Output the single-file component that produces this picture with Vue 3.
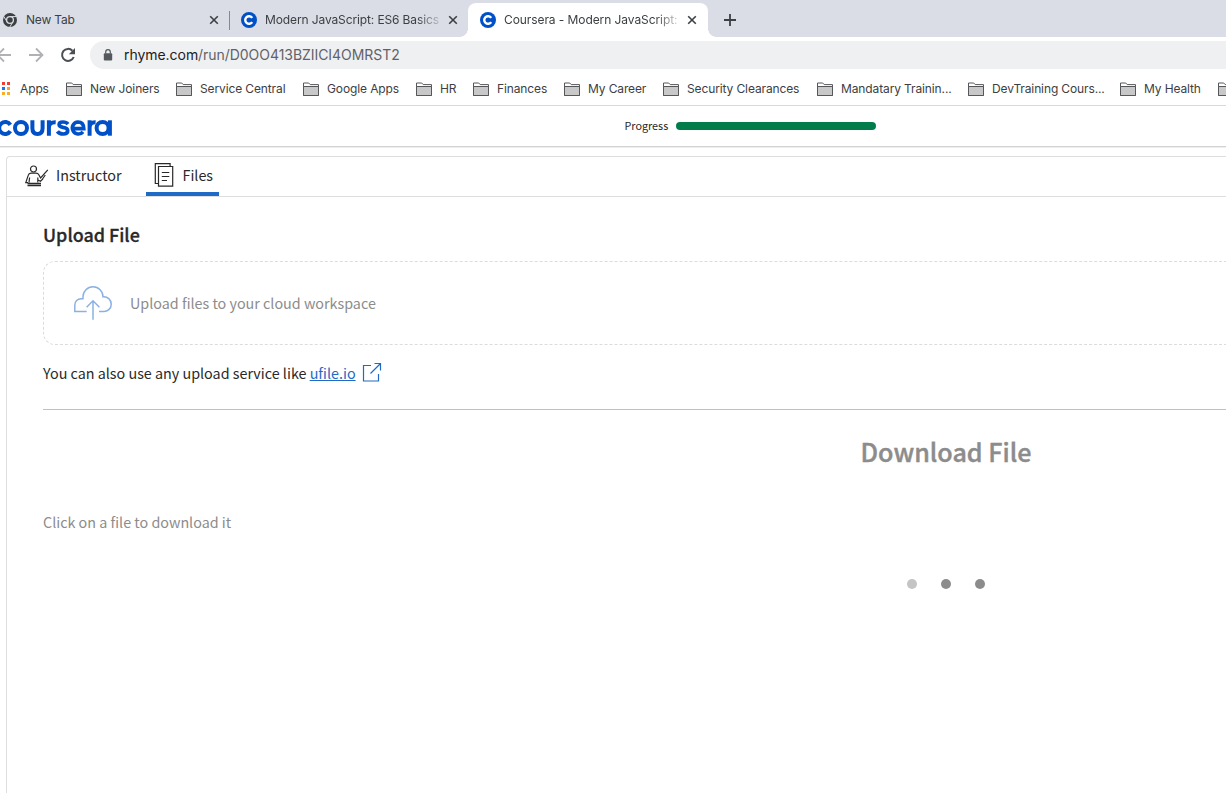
<script setup>
const bookmarks = [
  { label: 'New Joiners', x: 66, end: 176 },
  { label: 'Service Central', x: 176, end: 303 },
  { label: 'Google Apps', x: 303, end: 416 },
  { label: 'HR', x: 416, end: 473 },
  { label: 'Finances', x: 473, end: 564 },
  { label: 'My Career', x: 564, end: 663 },
  { label: 'Security Clearances', x: 663, end: 817 },
  { label: 'Mandatary Trainin...', x: 817, end: 968 },
  { label: 'DevTraining Cours...', x: 968, end: 1120 },
  { label: 'My Health', x: 1120, end: 1218 },
  { label: '', x: 1218, end: 1250 },
]
const appDots = ['#f33b30', '#f33b30', '#1a73e8', '#f9a02b', '#fbad28', '#fbad28']
</script>

<template>
  <div class="window">
    <div class="tabs">
      <div class="tab first">
        <svg class="chrome" width="16" height="16" viewBox="0 0 16 16">
          <circle cx="8" cy="8" r="7" fill="#3c4043" />
          <circle cx="8" cy="8" r="3.4" fill="#3c4043" stroke="#dadde5" stroke-width="1.3" />
          <path d="M8 4.6H14.4M5 9.7L1.7 4.3M11 9.7L7.8 15" stroke="#dadde5" stroke-width="1" />
        </svg>
        <span class="title t1">New Tab</span>
        <svg class="close" width="8" height="8" viewBox="0 0 8 8"><path d="M.2.2l7.600 7.600M7.800.2L.2 7.800" /></svg>
      </div>
      <div class="tab second">
        <svg class="fav" width="16" height="16" viewBox="0 0 16 16">
          <circle cx="8" cy="8" r="8" fill="#0050c8" />
          <path d="M11.2 5.9A3.8 3.8 0 1 0 11.2 10.1" fill="none" stroke="#fff" stroke-width="2.4" />
        </svg>
        <span class="title t2">Modern JavaScript: ES6 Basics</span>
        <svg class="close" width="8" height="8" viewBox="0 0 8 8"><path d="M.2.2l7.600 7.600M7.800.2L.2 7.800" /></svg>
      </div>
      <div class="tab active">
        <svg class="fav" width="16" height="16" viewBox="0 0 16 16">
          <circle cx="8" cy="8" r="8" fill="#0050c8" />
          <path d="M11.2 5.9A3.8 3.8 0 1 0 11.2 10.1" fill="none" stroke="#fff" stroke-width="2.4" />
        </svg>
        <span class="title t3">Coursera - Modern JavaScript:</span>
        <svg class="close" width="8" height="8" viewBox="0 0 8 8"><path d="M.2.2l7.600 7.600M7.800.2L.2 7.800" /></svg>
      </div>
      <svg class="plus" width="12" height="12" viewBox="0 0 12 12"><path d="M6 0v12M0 6h12" stroke="#3c4043" stroke-width="1.8" /></svg>
    </div>

    <div class="toolbar">
      <svg class="nav" width="90" height="28" viewBox="0 0 90 28" fill="none">
        <path d="M11 14H-2M4 7.500l-6.500 6.500 6.500 6.500" stroke="#afb1b4" stroke-width="1.8" />
        <path d="M29 14h13M36 7.500l6.500 6.500-6.500 6.500" stroke="#afb1b4" stroke-width="1.8" />
        <path d="M72.400 9.700A6 6 0 1 0 73.700 16" stroke="#4b4e52" stroke-width="2" />
        <path d="M75 7v6.200h-6.200z" fill="#4b4e52" />
      </svg>
      <div class="address">
        <svg width="10" height="12" viewBox="0 0 10 12">
          <rect x=".8" y="4.200" width="8.400" height="7.300" rx="1" fill="#55585d" />
          <path d="M2.700 4.500V3a2.300 2.300 0 0 1 4.600 0v1.500" fill="none" stroke="#55585d" stroke-width="1.200" />
        </svg>
        <span class="url"><b>rhyme.com</b>/run/D0OO413BZIICI4OMRST2</span>
      </div>
    </div>

    <div class="bookmarks">
      <div class="apps">
        <div class="dots"><i v-for="(c, i) in appDots" :key="i" :style="{ background: c }" /></div>
        <span>Apps</span>
      </div>
      <div v-for="b in bookmarks" :key="b.x" class="bookmark" :style="{ width: b.end - b.x + 'px' }">
        <svg width="16" height="14" viewBox="0 0 16 14">
          <path d="M.5 1h5.200l1.500 1.600h8.300v10.900H.5z" fill="#fff" stroke="#55575a" />
          <path d="M.5 4.500h15v9H.5z" fill="#c8c8c8" stroke="#55575a" />
        </svg>
        <span>{{ b.label }}</span>
      </div>
    </div>

    <header class="brand">
      <svg class="logo" width="114" height="20" viewBox="0 0 114 20" fill="none" stroke="#0050c8" stroke-width="4">
        <path d="M11.300 6.900A6 6 0 1 0 11.300 13.100" />
        <circle cx="22" cy="10" r="6" />
        <path d="M33.400 2.300v8q0 5.700 5.100 5.700t5.100-5.700v-8" />
        <path d="M49.900 17.700V2.300M49.900 10q0-6 6.800-5.700" />
        <path d="M69 6.100Q67.300 4 64 4q-3.900 0-3.900 2.500 0 2.200 3.900 2.900 4.700.7 4.700 3.300 0 3.300-4.500 3.300-4 0-5.800-2.600" stroke-width="3.700" />
        <path d="M73.500 10.600h11.300Q84.600 4 79 4a6 6 0 1 0 5 9.800" stroke-width="3.600" />
        <path d="M90.600 17.700V2.300M90.600 10q0-6 6-5.700" />
        <circle cx="103.600" cy="10" r="6" />
        <path d="M110.900 2.300v15.400" />
      </svg>
      <span class="progress-label">Progress</span>
      <div class="progress" />
    </header>

    <main class="panel">
      <nav class="sections">
        <div class="section instructor">
          <svg width="24" height="24" viewBox="0 0 24 24" fill="none" stroke="#292929" stroke-width="1.200">
            <circle cx="8.500" cy="4" r="3" />
            <path d="M3 17.600H.8L3.200 10.400Q3.800 8.200 6 8.200h5q2 0 2.800 1.500l1.800 3.300L22.800 4.800M16.800 15l3.500-5M4.600 12.500l-.6 5.100M12.800 12.500v5.100M13 15l2.500 1.200 2.500-2.400" />
            <path d="M2.500 18.500h13.500M2.500 20.500h13.500" stroke-width="1.400" />
          </svg>
          <span>Instructor</span>
        </div>
        <div class="section files">
          <svg width="20" height="24" viewBox="0 0 20 24" fill="none" stroke="#292929" stroke-width="1.200">
            <path d="M4.300 20.500H1.300V.7h14.800v2.900" />
            <path d="M4.500 3.500h14.200v19.700H4.500zM7.800 9.500h7.500M7.800 13.500h7.500M7.800 17.500h5.200" />
          </svg>
          <span>Files</span>
        </div>
      </nav>

      <div class="body">
        <h2>Upload File</h2>
        <div class="drop">
          <svg width="40" height="36" viewBox="0 0 40 36" fill="none" stroke="#8bb1e4" stroke-width="1.500">
            <path d="M13.700 26.500H1.800V20a6.300 6.300 0 0 1 6.300-6.300H10V11.800A10 10 0 0 1 30 11.800a7.400 7.400 0 1 1 0 14.700h-4" />
            <path d="M20 34.700V15.500M13.600 22.200l6.400-6.400 6.400 6.400" />
          </svg>
          <span>Upload files to your cloud workspace</span>
        </div>
        <p class="alt">
          <span>You can also use any upload service like <a>ufile.io</a></span>
          <svg width="18" height="19" viewBox="0 0 18 19" fill="none" stroke="#1f6ac4" stroke-width="1.200">
            <path d="M8 2.500H.5v15.500h15V11M11.500.5h6v7M17.500.5L7.500 10.500" />
          </svg>
        </p>
        <hr />
        <h1>Download File</h1>
        <p class="hint">Click on a file to download it</p>
        <div class="loader"><i /><i /><i /></div>
      </div>
    </main>
  </div>
</template>

<style>
body { overflow: hidden; background: #fff; }
</style>

<style scoped>
.window { width: 1226px; height: 793px; overflow: hidden; font-family: Inter, sans-serif; font-size: 12px; color: #3c4043; }
svg { display: block; flex: none; overflow: visible; }
.window * { box-sizing: border-box; }
.tabs { height: 37px; background: #dadde5; display: flex; align-items: flex-start; }
.tab { display: flex; align-items: center; height: 40px; white-space: nowrap; }
.first { width: 230px; position: relative; padding-left: 2px; }
.first::after { content: ''; position: absolute; right: 0; top: 11px; width: 1px; height: 19px; background: #85888d; }
.second { width: 238px; padding-left: 11px; }
.active { width: 240px; height: 34px; margin-top: 3px; padding-left: 12px; background: #fff; border-radius: 8px 8px 0 0; position: relative; }
.active::before, .active::after { content: ''; position: absolute; bottom: 0; width: 8px; height: 8px; }
.active::before { left: -8px; background: radial-gradient(circle at 0 0, transparent 7.5px, #fff 8px); }
.active::after { right: -8px; background: radial-gradient(circle at 100% 0, transparent 7.5px, #fff 8px); }
.title { margin-left: 8px; letter-spacing: -.12px; line-height: 16px; margin-top: -1px; }
.t1 { width: 184px; letter-spacing: -.2px; }
.t2, .t3 { width: 176px; margin-right: 8px; -webkit-mask-image: linear-gradient(90deg, #000 86%, transparent 102%); mask-image: linear-gradient(90deg, #000 86%, transparent 102%); }
.t3 { letter-spacing: -.08px; }
.close path { stroke: #3c4043; stroke-width: 1.6; }
.plus { margin: 14px 0 0 16px; }
.toolbar { height: 35px; padding-top: 4px; display: flex; }
.address { flex: 1; height: 28px; background: #eff0f2; border-radius: 14px 0 0 14px; display: flex; align-items: center; padding-left: 13px; }
.url { margin: -1px 0 0 11px; font-size: 14px; letter-spacing: -.05px; color: #5f6368; white-space: nowrap; }
.url b { font-weight: 400; color: #202124; }
.bookmarks { height: 34px; border-bottom: 1px solid #d8d9da; display: flex; align-items: center; white-space: nowrap; letter-spacing: -.12px; }
.apps { width: 66px; flex: none; display: flex; padding-left: 2px; align-items: center; }
.dots { display: grid; grid-template-columns: 3px 3px; gap: 2px; width: 8px; margin-right: 10px; }
.dots i { height: 3px; }
.bookmark { flex: none; display: flex; align-items: center; }
.bookmark span { margin-left: 8px; }
.brand { height: 41px; border-bottom: 1px solid #d3d3d3; box-shadow: 0 1px 0 #eee; display: flex; position: relative; font-family: "Noto Sans CJK SC", sans-serif; }
.logo { margin: 12px 0 0 -1px; }
.progress-label { margin-left: 511.5px; width: 51.5px; line-height: 38px; font-size: 10.8px; color: #292929; }
.progress { width: 200px; height: 8px; border-radius: 4px; background: #007d4b; margin-top: 16px; }
.panel { margin: 9px 0 0 6px; height: 637px; border: 1px solid #dedede; border-width: 1px 0 0 1px; border-radius: 4px 0 0 0; font-family: "Noto Sans CJK SC", sans-serif; font-size: 14.34px; color: #292929; }
.sections { height: 40px; border-bottom: 1px solid #dedede; display: flex; }
.section { display: flex; align-items: center; height: 39px; white-space: nowrap; }
.section span { margin-top: -4px; }
.instructor { width: 139px; padding-left: 18px; }
.instructor span { margin-left: 7px; }
.files { width: 73px; padding-left: 8px; border-bottom: 4px solid #1f6ac4; padding-top: 1px; }
.files span { margin-left: 8.5px; margin-top: -1px; }
.body { padding-left: 36px; }
h2 { margin: 24px 0 0; font-size: 17.9px; line-height: 26px; font-weight: 500; -webkit-text-stroke: .3px currentColor; }
.drop { height: 84px; margin-top: 14px; border: 1px dashed #dcdcdc; border-right: 0; border-radius: 12px 0 0 12px; display: flex; align-items: center; padding-left: 29px; color: #8c8c8c; }
.drop span { margin: -2px 0 0 17px; }
.alt { margin: 15px 0 0; height: 26px; display: flex; align-items: center; }
.alt span { width: 320px; white-space: nowrap; margin-top: -2px; }
.alt svg { margin-top: -1px; }
.alt a { color: #1f6ac4; text-decoration: underline; }
hr { border: 0; height: 1px; background: #c1c1c1; margin: 23px 0 0; }
h1 { margin: 23px 0 0; width: 1806px; text-align: center; font-size: 25.1px; line-height: 36px; font-weight: 500; color: #8c8c8c; -webkit-text-stroke: .4px currentColor; }
.hint { margin: 40px 0 0; line-height: 26px; color: #8c8c8c; }
.loader { display: flex; gap: 24px; margin: 44px 0 0 864px; }
.loader i { width: 10px; height: 10px; border-radius: 50%; background: #8c8c8c; }
.loader i:first-child { background: #c4c4c4; }
</style>
